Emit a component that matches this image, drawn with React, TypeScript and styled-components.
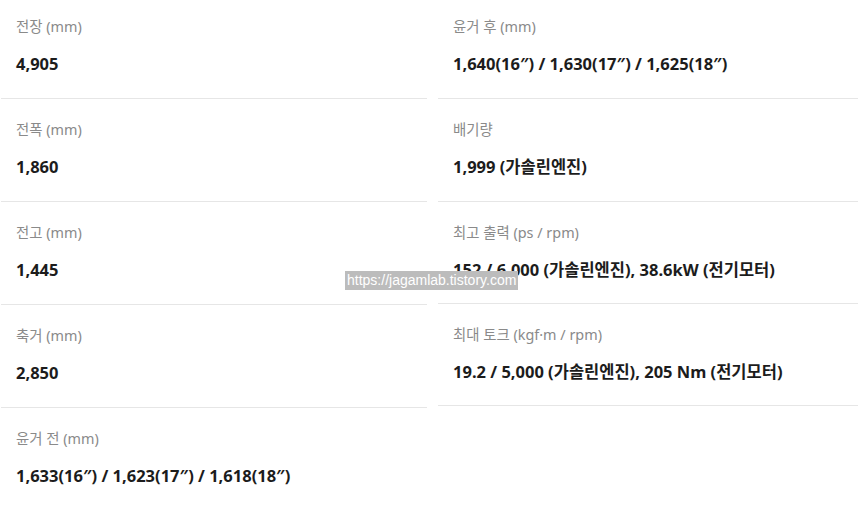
import React from "react";
import styled, { createGlobalStyle } from "styled-components";

const Global = createGlobalStyle`
  html, body { margin: 0; padding: 0; background: #ffffff; overflow: hidden; }
  body { font-family: "Noto Sans", "Noto Sans CJK KR", sans-serif; }
`;

const Page = styled.div`
  position: relative;
  width: 858px;
  height: 508px;
  overflow: hidden;
  background: #fff;
`;

const Grid = styled.div`
  display: grid;
  grid-template-columns: 426px 426px;
  column-gap: 11px;
  align-items: start;
  margin: -4px 0 0 1px;
`;

const Column = styled.div`
  display: flex;
  flex-direction: column;
`;

const Row = styled.div<{ $last?: boolean; $compact?: boolean }>`
  display: flex;
  flex-direction: column;
  gap: 15px;
  padding: 21px 15px ${(p) => (p.$compact ? "21px" : "22px")};
  border-bottom: ${(p) => (p.$last ? "none" : "1px solid #e6e6e6")};
`;

const Label = styled.div`
  font-family: "Noto Sans", "Noto Sans CJK KR", sans-serif;
  font-size: 14.4px;
  line-height: 20px;
  color: #8a8a8a;
`;

const Value = styled.div`
  font-family: "Noto Sans", "Noto Sans CJK KR", sans-serif;
  font-size: 16.5px;
  line-height: 24px;
  font-weight: 700;
  color: #1c1c1c;
`;

const Watermark = styled.div`
  position: absolute;
  left: 345px;
  top: 271px;
  height: 19px;
  padding: 0 2px;
  background: #bcbcbc;
  color: #ffffff;
  font-family: "Liberation Sans", Arial, sans-serif;
  font-size: 14px;
  line-height: 19px;
`;

type Spec = { label: string; value: string };

const left: Spec[] = [
  { label: "전장 (mm)", value: "4,905" },
  { label: "전폭 (mm)", value: "1,860" },
  { label: "전고 (mm)", value: "1,445" },
  { label: "축거 (mm)", value: "2,850" },
  { label: "윤거 전 (mm)", value: "1,633(16″) / 1,623(17″) / 1,618(18″)" },
];

const right: Spec[] = [
  { label: "윤거 후 (mm)", value: "1,640(16″) / 1,630(17″) / 1,625(18″)" },
  { label: "배기량", value: "1,999 (가솔린엔진)" },
  { label: "최고 출력 (ps / rpm)", value: "152 / 6,000 (가솔린엔진), 38.6kW (전기모터)" },
  { label: "최대 토크 (kgf·m / rpm)", value: "19.2 / 5,000 (가솔린엔진), 205 Nm (전기모터)" },
];

export default function App() {
  return (
    <Page>
      <Global />
      <Grid>
        <Column>
          {left.map((s, i) => (
            <Row key={s.label} $last={i === left.length - 1}>
              <Label>{s.label}</Label>
              <Value>{s.value}</Value>
            </Row>
          ))}
        </Column>
        <Column>
          {right.map((s, i) => (
            <Row key={s.label} $compact={i >= 2}>
              <Label>{s.label}</Label>
              <Value>{s.value}</Value>
            </Row>
          ))}
        </Column>
      </Grid>
      <Watermark>https://jagamlab.tistory.com</Watermark>
    </Page>
  );
}
